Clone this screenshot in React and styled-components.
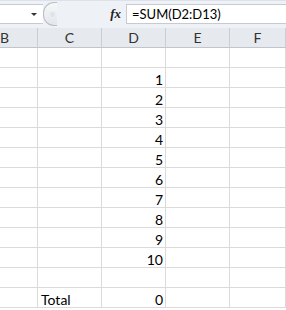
import React from "react";
import styled, { createGlobalStyle } from "styled-components";

const Global = createGlobalStyle`
  html, body { margin: 0; padding: 0; background: #ffffff; }
  body { font-family: "Lato", "Open Sans", "Liberation Sans", sans-serif; overflow: hidden; }
`;

const Page = styled.div`
  width: 286px;
  height: 310px;
  display: flex;
  flex-direction: column;
  background: #ffffff;
`;

const FormulaBar = styled.div`
  height: 28px;
  box-sizing: border-box;
  display: flex;
  padding: 3px 0 4px 0;
  background: #eef1f5;
  border-top: 1px solid #dde2e8;
`;

const NameBox = styled.div`
  width: 43px;
  box-sizing: border-box;
  background: #ffffff;
  border-top: 1px solid #c6cbd2;
  border-bottom: 1px solid #c6cbd2;
  display: flex;
  align-items: center;
  justify-content: flex-end;
  padding-right: 6px;
`;

const Arrow = styled.div`
  width: 0;
  height: 0;
  border-left: 3px solid transparent;
  border-right: 3px solid transparent;
  border-top: 3px solid #333;
`;

const Splitter = styled.div`
  width: 14px;
  box-sizing: border-box;
  border: 1px solid #b9bfc7;
  border-right: none;
  border-radius: 11px 0 0 11px;
  background: linear-gradient(#f7f8fa, #e3e6ea);
  display: flex;
  align-items: center;
  justify-content: center;
  margin-top: -2px;
  margin-bottom: -2px;
`;

const Dot = styled.div`
  width: 7px;
  height: 7px;
  border-radius: 50%;
  background: #dfe3e8;
  box-shadow: inset 0 0 0 1px #eef0f3;
  margin-left: 3px;
`;

const FxArea = styled.div`
  width: 69px;
  box-sizing: border-box;
  display: flex;
  align-items: center;
  justify-content: flex-end;
  padding-right: 5px;
  font-family: "Liberation Serif", "DejaVu Serif", serif;
  font-style: italic;
  font-weight: bold;
  font-size: 13px;
  color: #222;
`;

const Input = styled.div`
  flex: 1;
  box-sizing: border-box;
  background: #ffffff;
  border: 1px solid #c6cbd2;
  border-right: none;
  display: flex;
  align-items: center;
  padding-left: 5px;
  font-size: 13px;
  color: #000;
`;

const Grid = styled.div`
  display: grid;
  grid-template-columns: 38px 64px 64px 64px 56px;
`;

const Header = styled.div`
  height: 20px;
  box-sizing: border-box;
  background: #e6e9ee;
  border-right: 1px solid #c9ced6;
  border-bottom: 1px solid #bfc5cd;
  display: flex;
  align-items: center;
  justify-content: ${(p) => (p.$left ? "flex-start" : "center")};
  font-size: 14px;
  color: #333;
`;

const Cell = styled.div`
  height: 20px;
  box-sizing: border-box;
  border-right: 1px solid #dadada;
  border-bottom: 1px solid #dadada;
  display: flex;
  align-items: flex-end;
  justify-content: ${(p) => (p.$right ? "flex-end" : "flex-start")};
  padding: 0 2px 0 3px;
  font-size: 14px;
  line-height: 14px;
  color: #000;
`;

const rows = [
  ["", ""],
  ...Array.from({ length: 10 }, (_, i) => ["", String(i + 1)]),
  ["", ""],
  ["Total", "0"],
];

export default function App() {
  return (
    <Page>
      <Global />
      <FormulaBar>
        <NameBox>
          <Arrow />
        </NameBox>
        <Splitter>
          <Dot />
        </Splitter>
        <FxArea>fx</FxArea>
        <Input>=SUM(D2:D13)</Input>
      </FormulaBar>
      <Grid>
        <Header $left>B</Header>
        <Header>C</Header>
        <Header>D</Header>
        <Header>E</Header>
        <Header>F</Header>
        {rows.map(([c, d], i) => (
          <React.Fragment key={i}>
            <Cell />
            <Cell>{c}</Cell>
            <Cell $right>{d}</Cell>
            <Cell />
            <Cell />
          </React.Fragment>
        ))}
      </Grid>
    </Page>
  );
}
